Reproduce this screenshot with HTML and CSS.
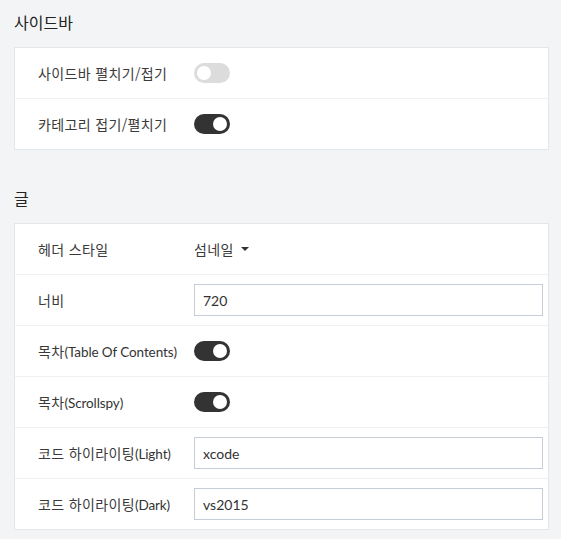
FILE: index.html
```html
<!DOCTYPE html>
<html lang="ko">
<head>
<meta charset="utf-8">
<link rel="stylesheet" href="styles.css">
</head>
<body>
<div class="page">
  <section class="section">
    <h2 class="section-title">사이드바</h2>
    <div class="card">
      <div class="row">
        <div class="label">사이드바 펼치기/접기</div>
        <div class="value"><span class="toggle"></span></div>
      </div>
      <div class="row">
        <div class="label">카테고리 접기/펼치기</div>
        <div class="value"><span class="toggle on"></span></div>
      </div>
    </div>
  </section>
  <section class="section">
    <h2 class="section-title">글</h2>
    <div class="card">
      <div class="row">
        <div class="label">헤더 스타일</div>
        <div class="value"><span class="select">섬네일<span class="caret"></span></span></div>
      </div>
      <div class="row">
        <div class="label">너비</div>
        <div class="value"><input class="input" type="text" value="720"></div>
      </div>
      <div class="row">
        <div class="label">목차<span class="en">(Table Of Contents)</span></div>
        <div class="value"><span class="toggle on"></span></div>
      </div>
      <div class="row">
        <div class="label">목차<span class="en">(Scrollspy)</span></div>
        <div class="value"><span class="toggle on"></span></div>
      </div>
      <div class="row">
        <div class="label">코드 하이라이팅<span class="en">(Light)</span></div>
        <div class="value"><input class="input" type="text" value="xcode"></div>
      </div>
      <div class="row">
        <div class="label">코드 하이라이팅<span class="en">(Dark)</span></div>
        <div class="value"><input class="input" type="text" value="vs2015"></div>
      </div>
    </div>
  </section>
</div>
</body>
</html>
```
FILE: styles.css
```css
html, body {
  margin: 0;
  padding: 0;
  background: #f3f4f6;
}
body {
  font-family: "Noto Sans CJK KR", "Noto Sans", sans-serif;
  color: #333;
}
.page {
  padding: 10px 12px 0 14px;
}
.section + .section {
  margin-top: 36px;
}
.section-title {
  margin: 0 0 13px 0;
  font-size: 16px;
  font-weight: 400;
  line-height: 24px;
  color: #222;
}
.card {
  background: #fff;
  border: 1px solid #e3e6ea;
}
.row {
  display: flex;
  align-items: center;
  height: 50px;
  padding: 0 5px 0 23px;
}
.row + .row {
  border-top: 1px solid #f0f1f3;
}
.label {
  width: 156px;
  flex: none;
  white-space: nowrap;
  font-family: "Noto Sans CJK KR", sans-serif;
  font-size: 14px;
  letter-spacing: 0.35px;
  color: #3a3a3a;
}
.en {
  font-family: Lato, "Noto Sans CJK KR", sans-serif;
  font-size: 13.5px;
  font-weight: 400;
  letter-spacing: -0.1px;
  color: #333;
}
.value {
  flex: 1;
  display: flex;
  align-items: center;
}
.toggle {
  position: relative;
  display: inline-block;
  width: 36px;
  height: 20px;
  border-radius: 10px;
  background: #dcdcdc;
}
.toggle::after {
  content: "";
  position: absolute;
  top: 3px;
  left: 3px;
  width: 14px;
  height: 14px;
  border-radius: 50%;
  background: #fff;
}
.toggle.on {
  background: #333;
}
.toggle.on::after {
  left: 19px;
}
.select {
  display: inline-flex;
  align-items: center;
  font-size: 14px;
  letter-spacing: 0.35px;
  color: #3a3a3a;
}
.caret {
  display: inline-block;
  margin-left: 7px;
  width: 0;
  height: 0;
  border-left: 4px solid transparent;
  border-right: 4px solid transparent;
  border-top: 4px solid #333;
}
.input {
  box-sizing: border-box;
  width: 100%;
  height: 32px;
  margin: 0;
  padding: 0 8px;
  border: 1px solid #c7cdd5;
  border-radius: 0;
  font-family: Lato, "Noto Sans CJK KR", sans-serif;
  font-size: 14px;
  font-weight: 400;
  color: #333;
  background: #fff;
  outline: none;
}
```
